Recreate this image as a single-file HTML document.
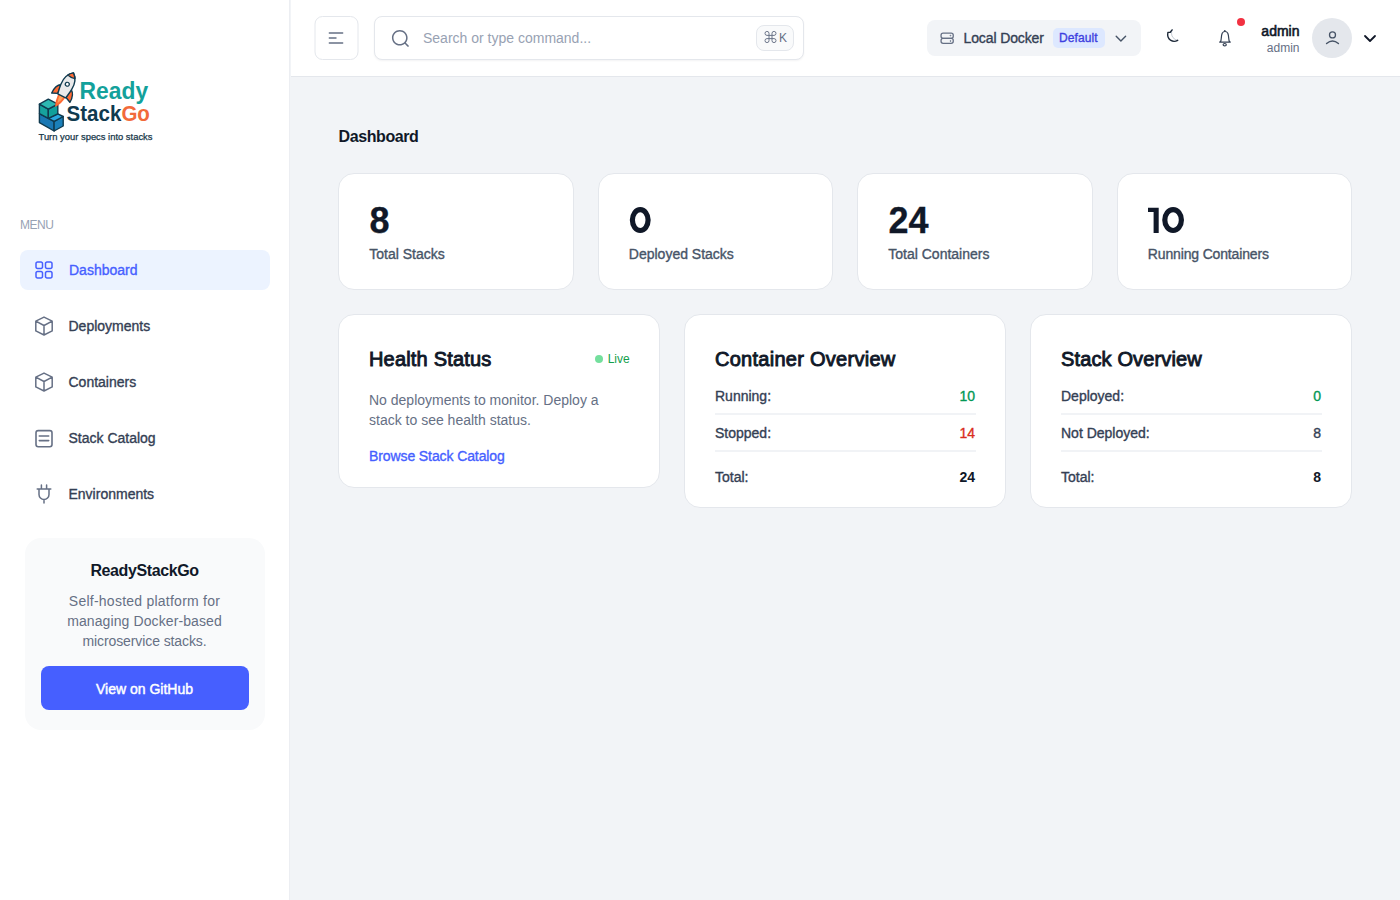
<!DOCTYPE html>
<html>
<head>
<meta charset="utf-8">
<style>
*{box-sizing:border-box;margin:0;padding:0}
html,body{width:1400px;height:900px;overflow:hidden}
body{position:relative;background:#f2f4f7;font-family:"Liberation Sans",sans-serif;color:#1d2939}
#sidebar{position:absolute;left:0;top:0;width:290px;height:900px;background:#fff;border-right:1px solid #eceef2}
#header{position:absolute;left:291px;top:0;width:1109px;height:77px;background:#fff;border-bottom:1px solid #e4e7ec}
.t{position:absolute;white-space:nowrap}
.s14{font-size:14px;line-height:14px}
.s12{font-size:12px;line-height:12px}
.s16{font-size:16px;line-height:16px}
.s20{font-size:20px;line-height:20px}
.s36{font-size:36px;line-height:36px;-webkit-text-stroke:0.3px currentColor}
.b{font-weight:700}
.med{-webkit-text-stroke:0.35px currentColor}
.semi{-webkit-text-stroke:0.9px currentColor}
.mi{position:absolute;left:20px;width:250px;height:40px;border-radius:8px}
.mi.active{background:#ecf3ff}
.card{position:absolute;background:#fff;border:1px solid #e4e7ec;border-radius:16px}
.ic{position:absolute;overflow:visible}
.hr{position:absolute;height:2px;background:#f1f3f6}
</style>
</head>
<body>
<!-- ================= SIDEBAR ================= -->
<div id="sidebar">
  <!-- logo -->
  <svg class="ic" style="left:30px;top:65px" width="130" height="85" viewBox="30 65 130 85">
    <g stroke="#0f3a4f" stroke-width="1.4" stroke-linejoin="round">
      <!-- lower block -->
      <polygon points="39.4,113.6 54.1,121.3 54.1,131 39.4,122.6" fill="#1a78b4"/>
      <polygon points="54.1,121.3 63.2,116.5 63.2,126 54.1,131" fill="#1b80ba"/>
      <polygon points="48.3,118.4 57.8,113.8 63.2,116.5 54.1,121.3" fill="#2aa8e0"/>
      <!-- upper cube -->
      <polygon points="39.4,104.2 48.3,109.2 48.3,118.4 39.4,113.6" fill="#16a29d"/>
      <polygon points="48.3,109.2 57.8,104.2 57.8,113.8 48.3,118.4" fill="#10a09b"/>
      <polygon points="48.3,99.2 39.4,104.2 48.3,109.2 57.8,104.2" fill="#2db8b2"/>
    </g>
    <g transform="translate(67.6,84.3) rotate(27)" stroke="#0f3a4f" stroke-width="1.4" stroke-linejoin="round">
      <path d="M-4,12.8 Q-3.8,20 -0.8,26 Q3.6,20 4,12.8 Z" fill="#ff6a33" stroke="none"/>
      <path d="M-2.2,12.8 Q-1.9,17.5 -0.5,21.5 Q1.8,17.5 2.2,12.8 Z" fill="#ffa35c" stroke="none"/>
      <path d="M-5.6,3 C-8.8,5 -10.5,10 -10.2,15 L-4.6,12.5 Z" fill="#ff6a33"/>
      <path d="M5.6,3 C8.8,5 10.5,10 10.2,15 L4.6,12.5 Z" fill="#ff6a33"/>
      <path d="M0,-12.8 C5,-9 6.6,-3 6,3 C5.7,7 5,10 4.4,13 L-4.4,13 C-5,10 -5.7,7 -6,3 C-6.6,-3 -5,-9 0,-12.8 Z" fill="#e9e9ea"/>
      <path d="M0,-12.8 C2,-11.2 3.2,-9.8 4,-8.4 Q0,-7.2 -4,-8.4 C-3.2,-9.8 -2,-11.2 0,-12.8 Z" fill="#ff6a33"/>
      <circle cx="-0.3" cy="0.1" r="2" fill="#fff" stroke-width="1.2"/>
    </g>
    <text x="79.6" y="99.1" font-family="Liberation Sans" font-weight="700" font-size="23" fill="#13a19b" textLength="68.5" lengthAdjust="spacingAndGlyphs">Ready</text>
    <text x="66.6" y="120.9" font-family="Liberation Sans" font-weight="700" font-size="22" fill="#0f3a4f" textLength="83.3" lengthAdjust="spacingAndGlyphs">Stack<tspan fill="#f26a3b">Go</tspan></text>
    <text x="38.5" y="139.5" font-family="Liberation Sans" font-size="9.4" fill="#17384a" stroke="#17384a" stroke-width="0.25" textLength="114" lengthAdjust="spacingAndGlyphs">Turn your specs into stacks</text>
  </svg>

  <div class="t s12" style="left:20px;top:219px;color:#98a2b3;letter-spacing:-0.5px">MENU</div>

  <div class="mi active" style="top:250px"></div>
  <svg class="ic" style="left:32px;top:258px" width="24" height="24" viewBox="0 0 24 24" fill="#465fff"><path fill-rule="evenodd" d="M5.5 3.25C4.25736 3.25 3.25 4.25736 3.25 5.5V8.99998C3.25 10.2426 4.25736 11.25 5.5 11.25H9C10.2426 11.25 11.25 10.2426 11.25 8.99998V5.5C11.25 4.25736 10.2426 3.25 9 3.25H5.5ZM4.75 5.5C4.75 5.08579 5.08579 4.75 5.5 4.75H9C9.41421 4.75 9.75 5.08579 9.75 5.5V8.99998C9.75 9.41419 9.41421 9.74998 9 9.74998H5.5C5.08579 9.74998 4.75 9.41419 4.75 8.99998V5.5ZM5.5 12.75C4.25736 12.75 3.25 13.7574 3.25 15V18.5C3.25 19.7426 4.25736 20.75 5.5 20.75H9C10.2426 20.75 11.25 19.7427 11.25 18.5V15C11.25 13.7574 10.2426 12.75 9 12.75H5.5ZM4.75 15C4.75 14.5858 5.08579 14.25 5.5 14.25H9C9.41421 14.25 9.75 14.5858 9.75 15V18.5C9.75 18.9142 9.41421 19.25 9 19.25H5.5C5.08579 19.25 4.75 18.9142 4.75 18.5V15ZM12.75 5.5C12.75 4.25736 13.7574 3.25 15 3.25H18.5C19.7426 3.25 20.75 4.25736 20.75 5.5V8.99998C20.75 10.2426 19.7426 11.25 18.5 11.25H15C13.7574 11.25 12.75 10.2426 12.75 8.99998V5.5ZM15 4.75C14.5858 4.75 14.25 5.08579 14.25 5.5V8.99998C14.25 9.41419 14.5858 9.74998 15 9.74998H18.5C18.9142 9.74998 19.25 9.41419 19.25 8.99998V5.5C19.25 5.08579 18.9142 4.75 18.5 4.75H15ZM15 12.75C13.7574 12.75 12.75 13.7574 12.75 15V18.5C12.75 19.7426 13.7574 20.75 15 20.75H18.5C19.7426 20.75 20.75 19.7427 20.75 18.5V15C20.75 13.7574 19.7426 12.75 18.5 12.75H15ZM14.25 15C14.25 14.5858 14.5858 14.25 15 14.25H18.5C18.9142 14.25 19.25 14.5858 19.25 15V18.5C19.25 18.9142 18.9142 19.25 18.5 19.25H15C14.5858 19.25 14.25 18.9142 14.25 18.5V15Z"/></svg>
  <div class="t s14 med" style="left:69px;top:263px;color:#465fff">Dashboard</div>

  <svg class="ic" style="left:32px;top:314px" width="24" height="24" viewBox="0 0 24 24" fill="none" stroke="#667085" stroke-width="1.5" stroke-linejoin="round" stroke-linecap="round"><path d="M12 3.1 L20.2 7.2 V16.9 L12 21 L3.8 16.9 V7.2 Z M3.8 7.2 L12 11.5 L20.2 7.2 M12 11.5 V21"/></svg>
  <div class="t s14 med" style="left:68.5px;top:319px;color:#344054">Deployments</div>

  <svg class="ic" style="left:32px;top:370px" width="24" height="24" viewBox="0 0 24 24" fill="none" stroke="#667085" stroke-width="1.5" stroke-linejoin="round" stroke-linecap="round"><path d="M12 3.1 L20.2 7.2 V16.9 L12 21 L3.8 16.9 V7.2 Z M3.8 7.2 L12 11.5 L20.2 7.2 M12 11.5 V21"/></svg>
  <div class="t s14 med" style="left:68.5px;top:375px;color:#344054">Containers</div>

  <svg class="ic" style="left:32px;top:426px" width="24" height="24" viewBox="0 0 24 24" fill="none" stroke="#667085" stroke-width="1.6" stroke-linecap="round"><rect x="4" y="4.6" width="16" height="16.2" rx="2.2"/><path d="M7.3 10 H16.7 M7.3 14.6 H16.7"/></svg>
  <div class="t s14 med" style="left:68.5px;top:431px;color:#344054">Stack Catalog</div>

  <svg class="ic" style="left:32px;top:482px" width="24" height="24" viewBox="0 0 24 24" fill="none" stroke="#667085" stroke-width="1.5" stroke-linecap="round"><path d="M5.2 7 H18.8 M9.4 3 V7 M14.6 3 V7 M7 7 V12.4 A5 5 0 0 0 17 12.4 V7 M12 17.4 V21"/></svg>
  <div class="t s14 med" style="left:68.5px;top:487px;color:#344054">Environments</div>

  <!-- promo -->
  <div style="position:absolute;left:24.5px;top:538px;width:240px;height:192px;background:#f9fafb;border-radius:16px"></div>
  <div class="t s16 b" style="left:24.5px;width:240px;text-align:center;top:563px;color:#101828;letter-spacing:-0.4px">ReadyStackGo</div>
  <div class="t" style="left:24.5px;width:240px;text-align:center;top:591.3px;font-size:14px;line-height:20px;color:#667085;white-space:normal"><span style="letter-spacing:0.24px">Self-hosted platform for</span><br><span style="letter-spacing:0.1px">managing Docker-based</span><br><span style="letter-spacing:-0.1px">microservice stacks.</span></div>
  <div style="position:absolute;left:40.5px;top:666px;width:208px;height:44px;background:#465fff;border-radius:8px"></div>
  <div class="t s14" style="left:40.5px;width:208px;text-align:center;top:682px;color:#fff;-webkit-text-stroke:0.45px #fff">View on GitHub</div>
</div>

<!-- ================= HEADER ================= -->
<div id="header"></div>
<div style="position:absolute;left:314px;top:16px;width:44px;height:44px;border:1px solid #e4e7ec;border-radius:8px;background:#fff;transform:translateX(0.5px)"></div>
<svg class="ic" style="left:328px;top:32px" width="16" height="12" viewBox="0 0 16 12" fill="#667085"><path d="M0.583252 1C0.583252 0.585788 0.919038 0.25 1.33325 0.25H14.6666C15.0808 0.25 15.4166 0.585786 15.4166 1C15.4166 1.41421 15.0808 1.75 14.6666 1.75L1.33325 1.75C0.919038 1.75 0.583252 1.41422 0.583252 1ZM0.583252 11C0.583252 10.5858 0.919038 10.25 1.33325 10.25L14.6666 10.25C15.0808 10.25 15.4166 10.5858 15.4166 11C15.4166 11.4142 15.0808 11.75 14.6666 11.75L1.33325 11.75C0.919038 11.75 0.583252 11.4142 0.583252 11ZM1.33325 5.25C0.919038 5.25 0.583252 5.58579 0.583252 6C0.583252 6.41421 0.919038 6.75 1.33325 6.75L7.99992 6.75C8.41413 6.75 8.74992 6.41421 8.74992 6C8.74992 5.58579 8.41413 5.25 7.99992 5.25L1.33325 5.25Z"/></svg>

<div style="position:absolute;left:374px;top:16px;width:430px;height:44px;border:1px solid #e4e7ec;border-radius:8px;background:#fff;box-shadow:0 1px 2px rgba(16,24,40,0.05)"></div>
<svg class="ic" style="left:390px;top:28px;transform:translate(0.4px,0.4px)" width="20" height="20" viewBox="0 0 20 20" fill="#667085"><path fill-rule="evenodd" d="M3.04175 9.37363C3.04175 5.87693 5.87711 3.04199 9.37508 3.04199C12.8731 3.04199 15.7084 5.87693 15.7084 9.37363C15.7084 12.8703 12.8731 15.7053 9.37508 15.7053C5.87711 15.7053 3.04175 12.8703 3.04175 9.37363ZM9.37508 1.54199C5.04902 1.54199 1.54175 5.04817 1.54175 9.37363C1.54175 13.6991 5.04902 17.2053 9.37508 17.2053C11.2674 17.2053 13.003 16.5344 14.357 15.4176L17.177 18.238C17.4699 18.5309 17.9448 18.5309 18.2377 18.238C18.5306 17.9451 18.5306 17.4703 18.2377 17.1774L15.418 14.3573C16.5365 13.0033 17.2084 11.2669 17.2084 9.37363C17.2084 5.04817 13.7011 1.54199 9.37508 1.54199Z"/></svg>
<div class="t s14" style="left:423px;top:31px;color:#98a2b3">Search or type command...</div>
<div style="position:absolute;left:756px;top:25px;width:38px;height:26px;border:1px solid #e4e7ec;border-radius:8px;background:#f9fafb"></div>
<svg class="ic" style="left:760px;top:28px" width="30" height="20" viewBox="760 28 30 20" fill="none" stroke="#667085" stroke-width="0.95">
  <path d="M769 35.4 V33.2 A2 2 0 1 0 767 35.4 H774 A2 2 0 1 0 772 33.2 V40.6 A2 2 0 1 0 774 38.6 H767 A2 2 0 1 0 769 40.6 Z"/>
</svg>
<div class="t s12" style="left:779px;top:32px;color:#667085">K</div>

<!-- env selector -->
<div style="position:absolute;left:927px;top:20px;width:214px;height:36px;background:#f2f4f7;border-radius:8px"></div>
<svg class="ic" style="left:938px;top:30px" width="18" height="16" viewBox="938 30 18 16" fill="none" stroke="#667085" stroke-width="1.3">
  <rect x="941.05" y="33.05" width="12.2" height="5.25" rx="2.1"/><rect x="941.05" y="38.3" width="12.2" height="5.15" rx="2.1"/>
  <circle cx="950.5" cy="35.6" r="0.45" fill="#667085" stroke-width="0.8"/><circle cx="950.5" cy="41" r="0.45" fill="#667085" stroke-width="0.8"/>
</svg>
<div class="t s14 med" style="left:963.5px;top:31px;color:#344054;letter-spacing:-0.12px">Local Docker</div>
<div style="position:absolute;left:1053px;top:28px;width:52px;height:20px;background:#dde8ff;border-radius:5px"></div>
<div class="t s12" style="left:1059px;top:32px;color:#3d3fe0;-webkit-text-stroke:0.35px #3d3fe0;letter-spacing:0.1px">Default</div>
<svg class="ic" style="left:1112px;top:32px" width="18" height="14" viewBox="1112 32 18 14" fill="none" stroke="#475467" stroke-width="1.4" stroke-linecap="round" stroke-linejoin="round"><path d="M1116.2 36.2 L1120.9 41 L1125.6 36.2"/></svg>

<!-- moon -->
<svg class="ic" style="left:1160px;top:24px" width="26" height="24" viewBox="1160 24 26 24" fill="none" stroke-linecap="round" stroke-linejoin="round">
  <path d="M1172.1 29.9 C1171.2 32 1171.2 35.5 1173 37.6 C1174.2 39 1176 40 1177.7 40.3" stroke="#b4bcc8" stroke-width="0.8"/>
  <path d="M1172.1 29.9 L1170.3 32.2 L1167.9 32.4 C1167.3 35.5 1168 38.5 1170.5 40.2 C1172.7 41.6 1175.6 41.5 1177.7 40.3" stroke="#1d2939" stroke-width="1.4"/>
</svg>
<!-- bell -->
<svg class="ic" style="left:1214px;top:26px" width="22" height="24" viewBox="1214 26 22 24" fill="none" stroke="#344054" stroke-width="1.2" stroke-linejoin="round">
  <circle cx="1224.8" cy="30.9" r="0.9" fill="#344054" stroke="none"/>
  <path d="M1222.2 33.2 C1221.6 34.5 1221.4 36 1221.3 38 L1220.9 40.9 L1219.7 42.1 H1230.3 L1229.1 40.9 L1228.7 38 C1228.6 36 1228.4 34.5 1227.8 33.2 C1227.1 31.9 1226 31.5 1225 31.5 C1224 31.5 1222.9 31.9 1222.2 33.2 Z"/>
  <ellipse cx="1224.7" cy="44.7" rx="1.6" ry="1.2"/>
</svg>
<div style="position:absolute;left:1236.7px;top:18.2px;width:8px;height:8px;border-radius:50%;background:#f23141"></div>
<!-- user -->
<div class="t s14" style="left:1200px;width:99.5px;text-align:right;top:23.5px;color:#101828;-webkit-text-stroke:0.6px #101828">admin</div>
<div class="t s12" style="left:1200px;width:99.5px;text-align:right;top:42px;color:#667085">admin</div>
<div style="position:absolute;left:1312px;top:18px;width:40px;height:40px;border-radius:50%;background:#e4e7ec"></div>
<svg class="ic" style="left:1322px;top:28px" width="20" height="20" viewBox="1322 28 20 20" fill="none" stroke="#475467" stroke-width="1.3" stroke-linecap="round">
  <circle cx="1332.5" cy="34.9" r="3"/>
  <path d="M1326.6 43.5 Q1332.5 38.6 1338.4 43.5" stroke-width="1.5"/>
</svg>
<svg class="ic" style="left:1360px;top:30px" width="20" height="16" viewBox="1360 30 20 16" fill="none" stroke="#101828" stroke-width="1.8" stroke-linecap="round" stroke-linejoin="round"><path d="M1365 36 L1370 41 L1375 36"/></svg>

<!-- ================= MAIN ================= -->
<div class="t s16 b" style="left:338.5px;top:129px;color:#101828;letter-spacing:-0.4px">Dashboard</div>

<div class="card" style="left:338px;top:173px;width:235.5px;height:117px"></div>
<div class="t s36 b" style="left:369.5px;top:203px;color:#101828">8</div>
<div class="t s14 med" style="left:369.3px;top:246.5px;color:#475467">Total Stacks</div>

<div class="card" style="left:597.5px;top:173px;width:235.5px;height:117px"></div>
<svg class="ic" style="left:620px;top:200px" width="40" height="40" viewBox="620 200 40 40"><ellipse cx="640.25" cy="220.1" rx="7.85" ry="10.4" fill="none" stroke="#101828" stroke-width="5.2"/></svg>
<div class="t s14 med" style="left:628.8px;top:246.5px;color:#475467">Deployed Stacks</div>

<div class="card" style="left:857px;top:173px;width:235.5px;height:117px"></div>
<div class="t s36 b" style="left:888.5px;top:203px;color:#101828">24</div>
<div class="t s14 med" style="left:888.3px;top:246.5px;color:#475467">Total Containers</div>

<div class="card" style="left:1116.5px;top:173px;width:235.5px;height:117px"></div>
<svg class="ic" style="left:1140px;top:200px" width="60" height="40" viewBox="1140 200 60 40"><path d="M1148 207.8 H1158.7 V233 H1153.6 V212.1 H1148 Z" fill="#101828"/><ellipse cx="1173.1" cy="220.1" rx="8.3" ry="10.4" fill="none" stroke="#101828" stroke-width="5.2"/></svg>
<div class="t s14 med" style="left:1147.8px;top:246.5px;color:#475467;letter-spacing:-0.15px">Running Containers</div>

<!-- health -->
<div class="card" style="left:338px;top:314px;width:322px;height:174px"></div>
<div class="t s20 semi" style="left:369px;top:349px;color:#101828;letter-spacing:0.18px">Health Status</div>
<div style="position:absolute;left:595px;top:355px;width:8px;height:8px;border-radius:50%;background:#74df9d"></div>
<div class="t s12" style="left:607.7px;top:352.6px;color:#13a04c">Live</div>
<div class="t" style="left:369px;top:390.3px;font-size:14px;line-height:20px;color:#667085">No deployments to monitor. Deploy a<br>stack to see health status.</div>
<div class="t s14 med" style="left:369px;top:449px;color:#465fff;letter-spacing:-0.1px">Browse Stack Catalog</div>

<!-- container overview -->
<div class="card" style="left:684px;top:314px;width:322px;height:194px"></div>
<div class="t s20 semi" style="left:715px;top:348.7px;color:#101828;letter-spacing:0.27px">Container Overview</div>
<div class="t s14 med" style="left:715px;top:389.4px;color:#344054">Running:</div>
<div class="t s14 med" style="left:875px;width:100px;text-align:right;top:389.4px;color:#039855">10</div>
<div class="hr" style="left:715px;top:413px;width:261px"></div>
<div class="t s14 med" style="left:715px;top:426px;color:#344054">Stopped:</div>
<div class="t s14 med" style="left:875px;width:100px;text-align:right;top:426px;color:#d92d20">14</div>
<div class="hr" style="left:715px;top:450px;width:261px"></div>
<div class="t s14 med" style="left:715px;top:470.3px;color:#344054">Total:</div>
<div class="t s14 b" style="left:875px;width:100px;text-align:right;top:470.3px;color:#101828">24</div>

<!-- stack overview -->
<div class="card" style="left:1030px;top:314px;width:322px;height:194px"></div>
<div class="t s20 semi" style="left:1061px;top:349px;color:#101828;letter-spacing:0.14px">Stack Overview</div>
<div class="t s14 med" style="left:1061px;top:389.4px;color:#344054">Deployed:</div>
<div class="t s14 med" style="left:1221px;width:100px;text-align:right;top:389.4px;color:#039855">0</div>
<div class="hr" style="left:1061px;top:413px;width:261px"></div>
<div class="t s14 med" style="left:1061px;top:426.2px;color:#344054">Not Deployed:</div>
<div class="t s14 med" style="left:1221px;width:100px;text-align:right;top:426.2px;color:#344054">8</div>
<div class="hr" style="left:1061px;top:450px;width:261px"></div>
<div class="t s14 med" style="left:1061px;top:470.4px;color:#344054">Total:</div>
<div class="t s14 b" style="left:1221px;width:100px;text-align:right;top:470.4px;color:#101828">8</div>
</body>
</html>
